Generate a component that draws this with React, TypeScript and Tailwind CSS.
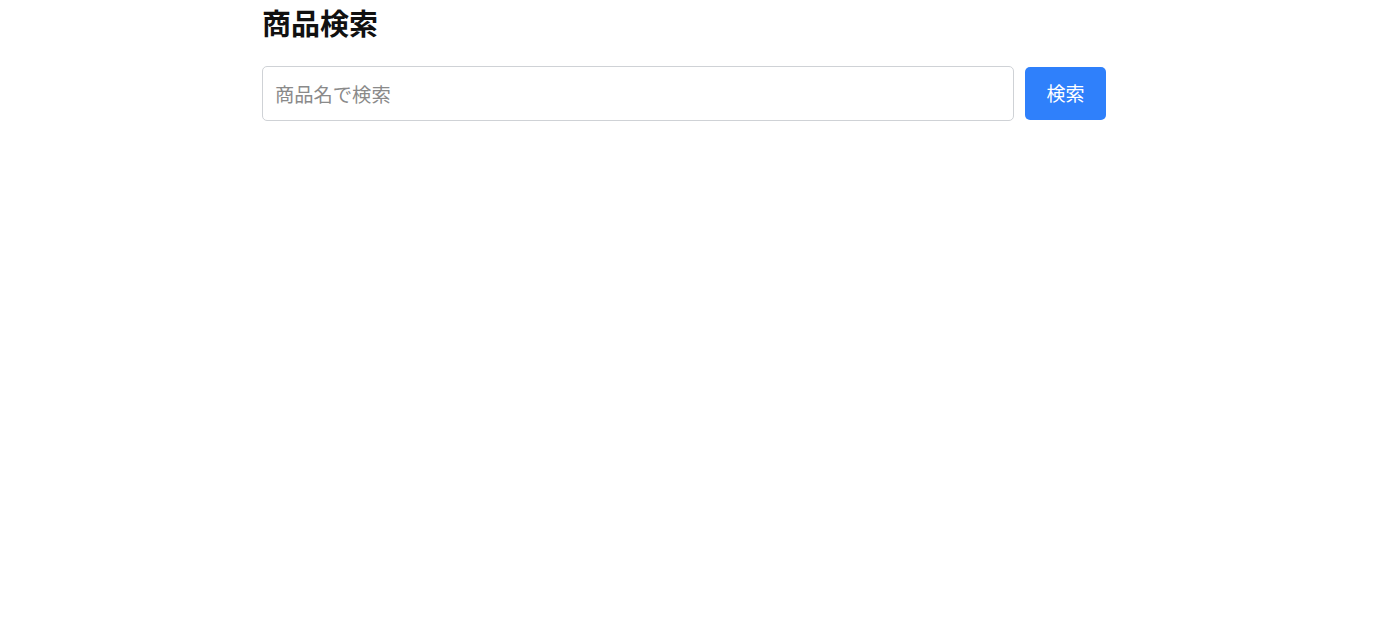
import React from "react";

export default function App() {
  return (
    <div className="min-h-screen bg-white" style={{ fontFamily: '"Noto Sans CJK JP", "Noto Sans", sans-serif' }}>
      <div className="w-[844px] ml-[262px]">
        <h1 className="text-[29px] font-bold leading-[40px] pt-[2px] pb-[2px] text-[#111]">商品検索</h1>
        <div className="flex items-center gap-[11px] mt-[22px]">
          <input
            className="w-[752px] h-[55px] border border-[#cfd2d6] rounded-[5px] px-[12px] text-[19.3px] text-[#333] placeholder:text-[#8a8a8a] outline-none"
            placeholder="商品名で検索"
          />
          <button className="w-[81px] h-[53px] rounded-[5px] bg-[#2f80fb] text-white text-[19px]">検索</button>
        </div>
      </div>
    </div>
  );
}
